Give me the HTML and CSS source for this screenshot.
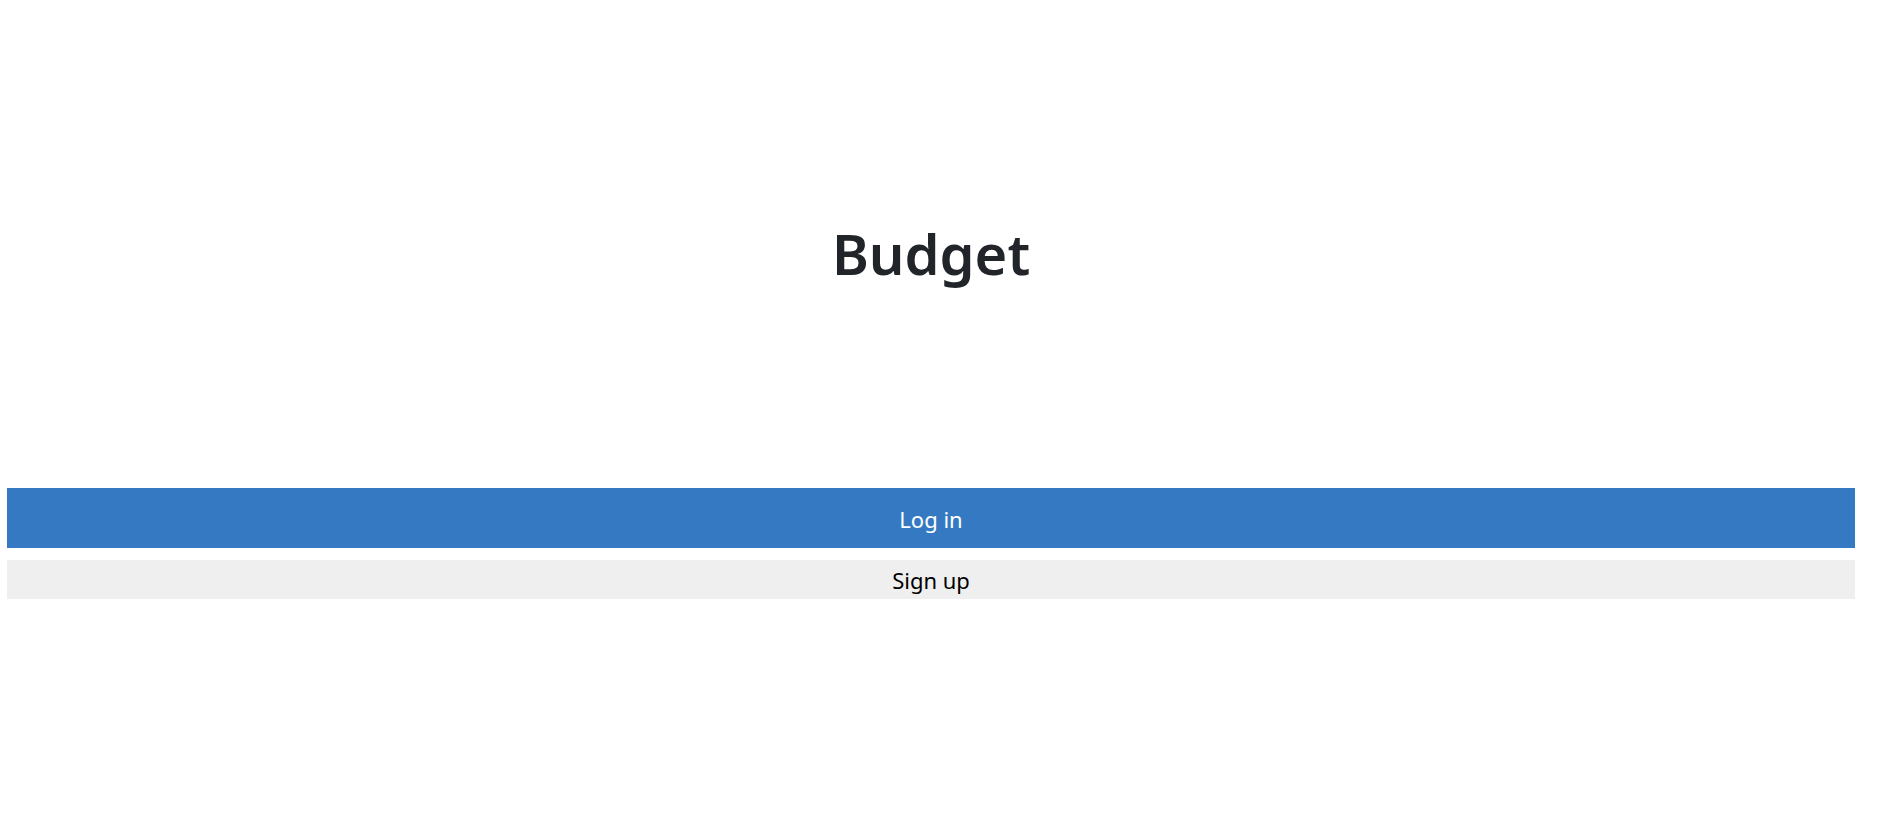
FILE: index.html
```html
<!DOCTYPE html>
<html>
<head>
<meta charset="utf-8">
<link rel="stylesheet" href="styles.css">
</head>
<body>
<div class="page">
  <header class="hero">
    <h1 class="title">Budget</h1>
  </header>
  <div class="actions">
    <button class="btn btn-primary">Log in</button>
    <button class="btn btn-light">Sign up</button>
  </div>
</div>
</body>
</html>
```
FILE: styles.css
```css
html, body {
  margin: 0;
  padding: 0;
  background: #fff;
}
body {
  font-family: "Noto Sans", "Open Sans", sans-serif;
}
.page {
  width: 1848px;
  margin-left: 7px;
  display: flex;
  flex-direction: column;
}
.hero {
  height: 488px;
  display: flex;
  flex-direction: column;
  align-items: center;
}
.title {
  margin: 213px 0 0 0;
  font-size: 56px;
  line-height: 80px;
  font-weight: 600;
  color: #212529;
}
.actions {
  display: flex;
  flex-direction: column;
  gap: 12px;
}
.btn {
  border: none;
  margin: 0;
  width: 100%;
  font-family: inherit;
  font-size: 22px;
  padding: 0;
}
.btn-primary {
  background: #3679c3;
  color: #fff;
  height: 60px;
  padding-top: 2px;
}
.btn-light {
  background: #efefef;
  color: #000;
  height: 39px;
}
```
